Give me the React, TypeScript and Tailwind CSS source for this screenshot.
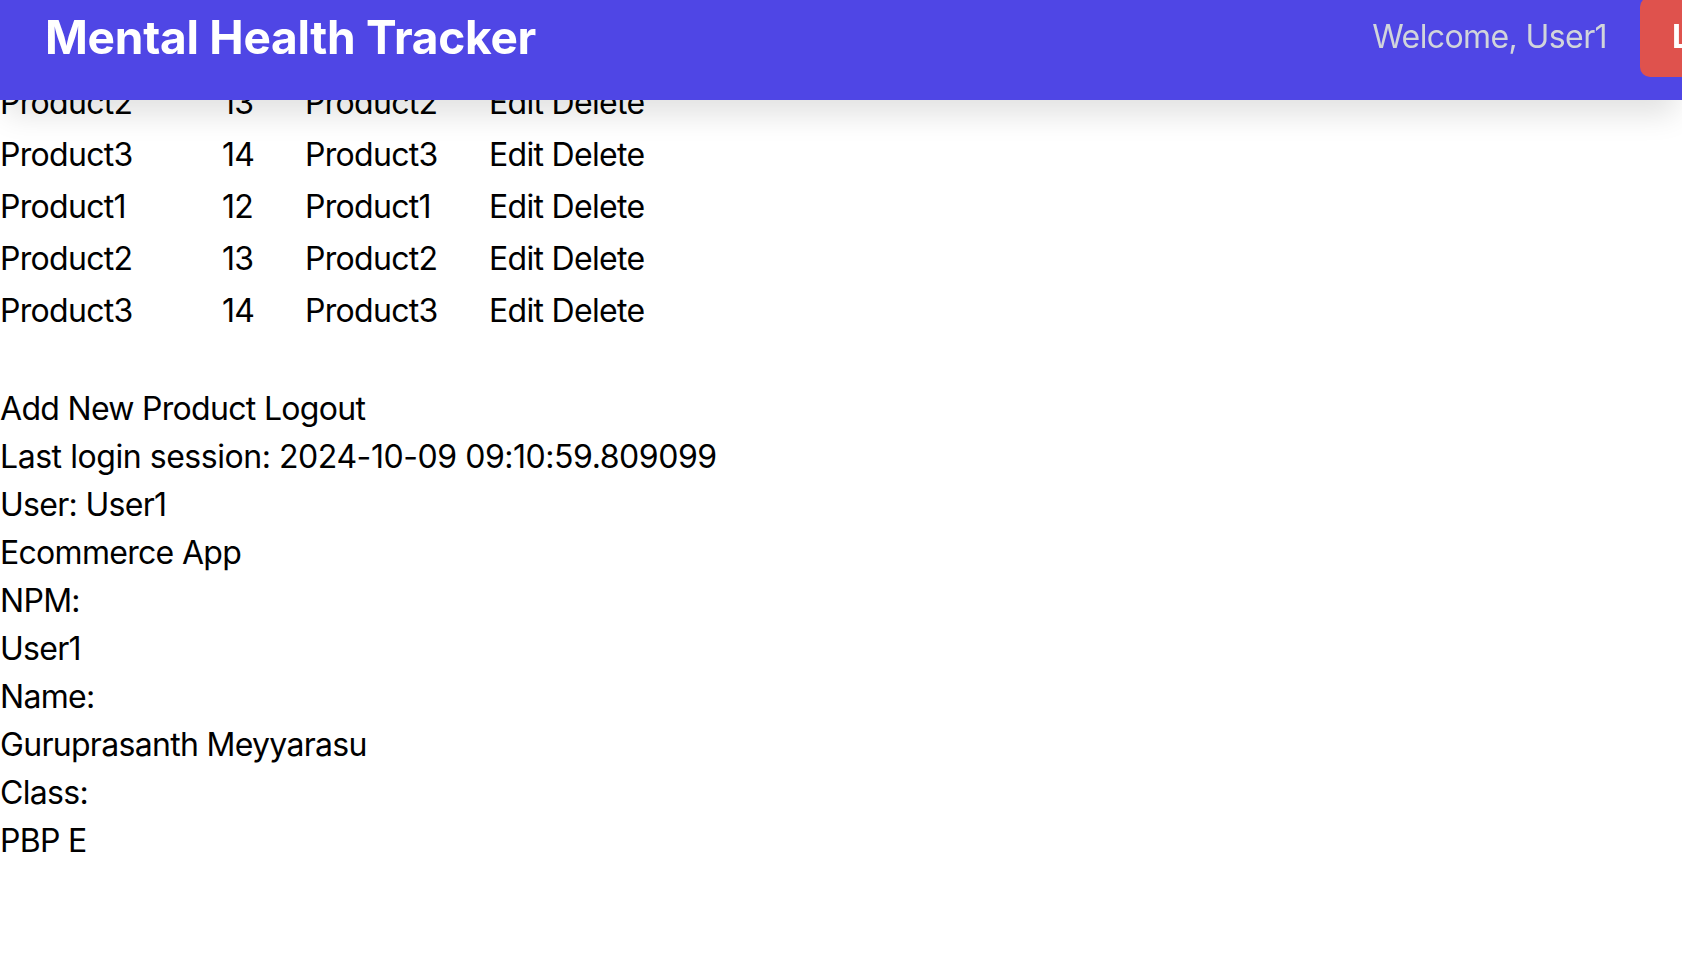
import React from "react";

const rows = [
  ["Product1", "12", "Product1"],
  ["Product2", "13", "Product2"],
  ["Product3", "14", "Product3"],
  ["Product1", "12", "Product1"],
  ["Product2", "13", "Product2"],
  ["Product3", "14", "Product3"],
];

const info = [
  "User: User1",
  "Ecommerce App",
  "NPM:",
  "User1",
  "Name:",
  "Guruprasanth Meyyarasu",
  "Class:",
  "PBP E",
];

export default function App() {
  return (
    <div className="min-h-[962px] w-full overflow-hidden bg-white font-['Inter',sans-serif] text-black">
      <header className="fixed left-0 right-0 top-0 z-10 h-[100px] overflow-hidden bg-[#4f46e5] shadow-[0_20px_30px_-6px_rgba(0,0,0,0.12)]">
        <div className="flex h-[74px] w-[1810px] items-center pl-[45px]">
          <h1 className="text-[46px] font-bold tracking-[-0.25px] text-white">Mental Health Tracker</h1>
          <div className="flex-1" />
          <span className="text-[32px] tracking-[-0.6px] text-[#d1d5db]">Welcome, User1</span>
          <button className="ml-[33px] h-[80px] w-[170px] shrink-0 rounded-[10px] bg-[#df524d] px-8 text-left text-[32px] font-bold text-white">
            Logout
          </button>
        </div>
      </header>

      <main className="pt-[25px] text-[32px] leading-[48px] tracking-[-0.7px]">
        <div className="grid w-max grid-cols-[222px_83px_184px_auto]">
          {rows.map((r, i) => (
            <React.Fragment key={i}>
              <div className="py-[2px]">{r[0]}</div>
              <div className="py-[2px]">{r[1]}</div>
              <div className="py-[2px]">{r[2]}</div>
              <div className="py-[2px]">
                <span>Edit</span> <span>Delete</span>
              </div>
            </React.Fragment>
          ))}
        </div>

        <div className="mt-12">
          <div>
            <span>Add New Product</span> <span>Logout</span>
          </div>
          <div className="tracking-[-0.45px]">Last login session: 2024-10-09 09:10:59.809099</div>
          {info.map((t, i) => (
            <div key={i}>{t}</div>
          ))}
        </div>
      </main>
    </div>
  );
}
